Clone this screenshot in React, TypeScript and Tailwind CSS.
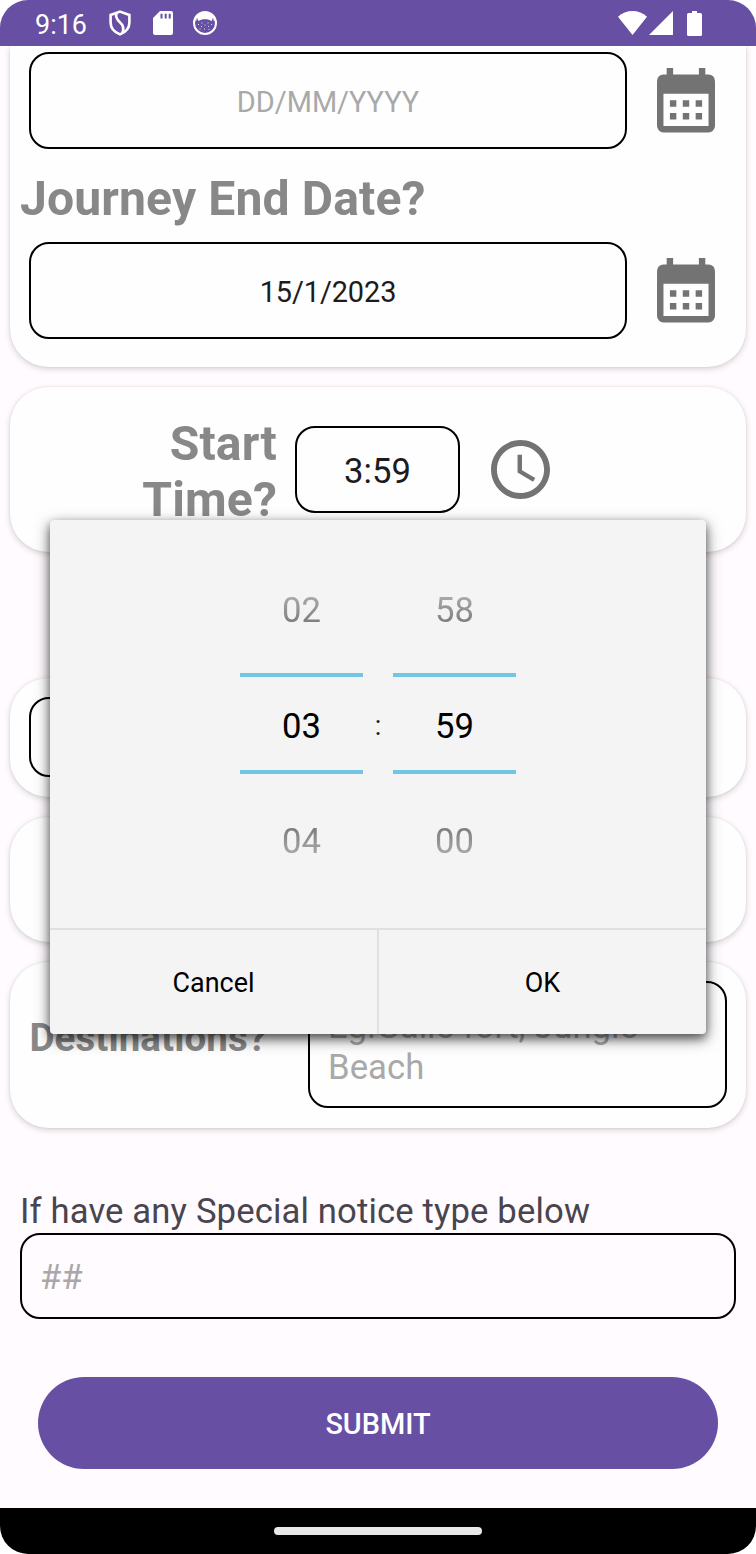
import React from "react";

function CalendarIcon() {
  return (
    <svg viewBox="0 0 18 20" className="h-[64.4px] w-[58px]" fill="#737373">
      <path
        fillRule="evenodd"
        d="M3 0h2v2h8V0h2v2h1a2 2 0 0 1 2 2v14a2 2 0 0 1-2 2H2a2 2 0 0 1-2-2V4a2 2 0 0 1 2-2h1zM2 8v10h14V8z"
      />
      <path d="M4 10h2v2H4zM8 10h2v2H8zM12 10h2v2h-2zM4 14h2v2H4zM8 14h2v2H8zM12 14h2v2h-2z" />
    </svg>
  );
}

function ClockIcon() {
  return (
    <svg viewBox="2 2 20 20" className="h-[59px] w-[59px]" fill="#737373">
      <path d="M11.99 2C6.47 2 2 6.48 2 12s4.47 10 9.99 10C17.52 22 22 17.52 22 12S17.52 2 11.99 2zM12 20c-4.42 0-8-3.58-8-8s3.58-8 8-8 8 3.58 8 8-3.58 8-8 8z" />
      <path d="M12.5 7H11v6l5.25 3.15.75-1.23-4.5-2.67z" />
    </svg>
  );
}

function StatusBar() {
  return (
    <header className="relative z-10 flex h-[46px] shrink-0 items-center bg-[#6750a4] pl-[35px] pr-[54px] text-white">
      <span className="w-[74px] pt-[3px] text-[26.95px] leading-[32px]">9:16</span>
      <svg viewBox="0 0 22 26" className="h-[26px] w-[22px]" fill="none" stroke="#fff" strokeWidth="2.6">
        <path d="M11 1.6 20.4 5v7.4c0 5.200-3.600 9.600-9.400 12-5.800-2.400-9.400-6.800-9.400-12V5z" />
        <path d="M7.500 3.200c-1.200 4 .2 6.400 3.600 9.200 3.600 3 4 5.600 2.400 10" />
      </svg>
      <svg viewBox="0 0 20 24" className="ml-[22px] h-[24px] w-[20px]" fill="#fff">
        <path
          fillRule="evenodd"
          d="M7 0h11a2 2 0 0 1 2 2v20a2 2 0 0 1-2 2H2a2 2 0 0 1-2-2V7zM7.500 2.800v4.600h2V2.800zM11.700 2.800v4.600h2V2.800zM15.700 2.800v4.600h2V2.800z"
        />
      </svg>
      <svg viewBox="0 0 24 24" className="ml-[20px] h-[24px] w-[24px]">
        <circle cx="12" cy="12" r="11" fill="none" stroke="#fff" strokeWidth="2" />
        <path
          fill="#fff"
          d="M2 9C3 4 7 1 12 1s9 3 10 8l-1.200 1-.8-3.500-1.200 3.500-3-1.200c-2.500-.6-5.100-.6-7.600 0l-3 1.200L4 6.500 3.200 10z"
        />
        <path
          stroke="#fff"
          strokeWidth="0.8"
          d="M5 13.500h1M8.500 12h1M8 15.500h1M14.500 12h1M18 13.500h1M11.500 14h1M6.500 18h1M11 18h1M15 15.500h1M15.500 18.500h1"
        />
      </svg>
      <div className="ml-auto flex items-center">
        <svg viewBox="0 0 29 24" className="h-[24px] w-[29px]" fill="#fff">
          <path d="M0 5.800C8-1.800 21-1.800 29 5.800L14.500 24z" />
        </svg>
        <svg viewBox="0 0 24 24" className="ml-[2px] h-[24px] w-[24px]" fill="#fff">
          <path d="M24 0v24H0z" />
        </svg>
        <svg viewBox="0 0 15 25" className="ml-[14px] h-[25px] w-[15px]" fill="#fff">
          <path d="M5 0h5v2h3.500A1.500 1.500 0 0 1 15 3.500v20a1.500 1.500 0 0 1-1.500 1.500h-12A1.500 1.500 0 0 1 0 23.500v-20A1.500 1.500 0 0 1 1.500 2H5z" />
        </svg>
      </div>
    </header>
  );
}

function Card({ className, children }: { className: string; children?: React.ReactNode }) {
  return (
    <section
      className={`mx-[10px] shrink-0 bg-[#fefefe] shadow-[0_2px_6px_rgba(0,0,0,0.17),0_0_2px_rgba(0,0,0,0.09)] ${className}`}
    >
      {children}
    </section>
  );
}

function DateRow({ value, className }: { value: string; className: string }) {
  return (
    <div className="flex items-center">
      <div
        className={`flex h-[97px] w-[598px] items-center justify-center rounded-[20px] border-2 border-black pt-[2px] text-[28.88px] leading-[34px] ${className}`}
      >
        <span>{value}</span>
      </div>
      <button className="ml-[30px]">
        <CalendarIcon />
      </button>
    </div>
  );
}

function Picker({ before, current, after }: { before: string; current: string; after: string }) {
  return (
    <div className="flex w-[123px] flex-col items-center text-[34.65px] leading-[40px]">
      <span className="text-[#6e6e6e] [mask-image:linear-gradient(to_bottom,rgba(0,0,0,0.55)_15%,rgba(0,0,0,0.9)_85%)]">
        {before}
      </span>
      <div className="mt-[43px] flex h-[101px] w-full items-center justify-center border-y-[4px] border-[#72c6e4] pt-[4px] text-black">
        <span>{current}</span>
      </div>
      <span className="mt-[47px] text-[#6e6e6e] [mask-image:linear-gradient(to_top,rgba(0,0,0,0.55)_15%,rgba(0,0,0,0.9)_85%)]">
        {after}
      </span>
    </div>
  );
}

function TimeDialog() {
  return (
    <div
      role="dialog"
      className="absolute left-[50px] top-[520px] z-20 flex h-[514px] w-[656px] flex-col rounded-[4px] bg-[#f4f4f4] shadow-[0_5px_15px_rgba(0,0,0,0.5),0_4px_8px_rgba(0,0,0,0.4)]"
    >
      <div className="flex h-[408px] justify-center pt-[70px]">
        <Picker before="02" current="03" after="04" />
        <span className="mt-[120px] w-[30px] text-center text-[26.95px] leading-[32px] text-[#1d1b20]">:</span>
        <Picker before="58" current="59" after="00" />
      </div>
      <div className="flex flex-1 border-t-2 border-[#e0e0e0] text-[26.95px] text-black">
        <button className="w-[327px] pt-[3px]">Cancel</button>
        <button className="flex-1 border-l-2 border-[#e0e0e0] pt-[3px]">OK</button>
      </div>
    </div>
  );
}

export default function App() {
  return (
    <div className="h-[1554px] w-[756px] bg-white font-[Roboto,sans-serif]">
      <div className="relative flex h-full flex-col overflow-hidden rounded-[28px] bg-[#fffbfe]">
        <StatusBar />

        <Card className="h-[321px] rounded-b-[38px] pl-[19px] pt-[6px]">
          <DateRow value="DD/MM/YYYY" className="text-[#a9a9a9]" />
          <h2 className="-ml-[9px] mt-[22px] h-[71px] text-[48.1px] font-bold leading-[56px] tracking-[0.12px] text-[#888888]">
            Journey End Date?
          </h2>
          <DateRow value="15/1/2023" className="tracking-[-0.1px] text-[#1d1b20]" />
        </Card>

        <Card className="mt-[20px] flex h-[165px] items-start rounded-[38px]">
          <h2 className="mt-[29px] w-[267px] pl-[120px] text-right text-[48.1px] font-bold leading-[56.4px] tracking-[0.12px] text-[#888888]">
            Start Time?
          </h2>
          <div className="ml-[18px] mt-[39px] flex h-[87px] w-[165px] items-center justify-center rounded-[20px] border-2 border-black pt-[5px] text-[34.65px] text-[#1d1b20]">
            <span>3:59</span>
          </div>
          <button className="ml-[31px] mt-[53px]">
            <ClockIcon />
          </button>
        </Card>

        <Card className="mt-[126px] h-[119px] rounded-[38px] px-[19px] pt-[19px]">
          <div className="h-[80px] w-[598px] rounded-[20px] border-2 border-black" />
        </Card>

        <Card className="mt-[20px] h-[125px] rounded-[38px]" />

        <Card className="mt-[20px] flex h-[166px] rounded-[38px] pl-[20px] pt-[19px]">
          <h2 className="-ml-[0.5px] mt-[34px] w-[278.5px] text-[38.5px] font-bold leading-[45px] tracking-[0.08px] text-[#888888]">
            Destinations?
          </h2>
          <div className="h-[127px] w-[419px] rounded-[20px] border-2 border-black pl-[18px] pt-[23px] text-[34.65px] leading-[40.6px] tracking-[0.05px] text-[#a9a9a9]">
            Eg.Galle fort, Jungle Beach
          </div>
        </Card>

        <p className="ml-[20px] mt-[62px] h-[43px] shrink-0 text-[34.65px] leading-[42px] tracking-[0.14px] text-[#49454f]">
          If have any Special notice type below
        </p>
        <div className="mx-[20px] flex h-[86px] shrink-0 items-center rounded-[20px] border-2 border-black pl-[18px] pt-[2px] text-[34.65px] leading-[42px] text-[#a9a7a9]">
          ##
        </div>
        <button className="mx-[38px] mt-[58px] h-[92px] shrink-0 rounded-full bg-[#6750a4] pt-[4px] text-[28.88px] font-medium text-white">
          SUBMIT
        </button>

        <nav className="mt-auto flex h-[46px] shrink-0 items-center justify-center bg-black">
          <div className="h-[8px] w-[208px] rounded-full bg-[#e8e8e8]" />
        </nav>

        <TimeDialog />
      </div>
    </div>
  );
}
